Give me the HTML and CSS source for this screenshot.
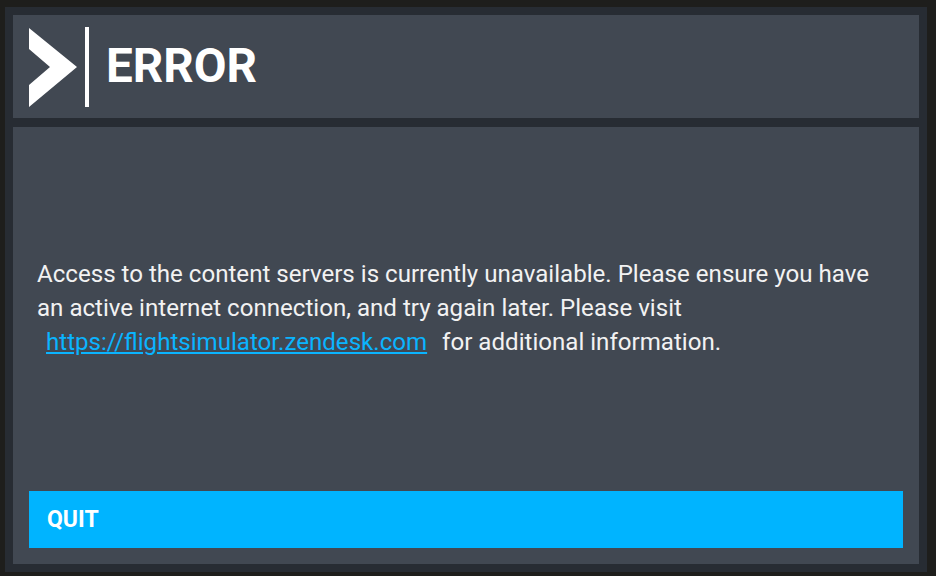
FILE: index.html
```html
<!DOCTYPE html>
<html lang="en">
<head>
<meta charset="utf-8">
<title>Error</title>
<link rel="stylesheet" href="styles.css">
</head>
<body>
<div class="frame">
  <header class="header">
    <svg class="logo" width="60" height="80" viewBox="0 0 60 80" aria-hidden="true">
      <polygon points="0,1 48,40 0,80 0,58 21,40 0,22" fill="#ffffff"/>
      <rect x="56" y="0" width="4" height="80" fill="#ffffff"/>
    </svg>
    <h1 class="title">ERROR</h1>
  </header>
  <main class="content">
    <div class="message">
      <p class="text">Access to the content servers is currently unavailable. Please ensure you have an active internet connection, and try again later. Please visit <a class="link" href="#">https://flightsimulator.zendesk.com</a> for additional information.</p>
    </div>
    <button class="quit">QUIT</button>
  </main>
</div>
</body>
</html>
```
FILE: styles.css
```css
html, body {
  margin: 0;
  padding: 0;
  height: 100%;
}
body {
  background: #1e1e1c;
  font-family: Roboto, "Liberation Sans", sans-serif;
  overflow: hidden;
}
.frame {
  box-sizing: border-box;
  margin: 7px 9px 0 5px;
  height: 565px;
  padding: 8px;
  background: #272c33;
  display: flex;
  flex-direction: column;
  gap: 9px;
}
.header {
  height: 103px;
  flex: none;
  background: #414852;
  display: flex;
  align-items: center;
  padding-left: 16px;
}
.logo {
  display: block;
  flex: none;
}
.title {
  margin: 0 0 0 17px;
  color: #ffffff;
  font-size: 47.6px;
  font-weight: 700;
  letter-spacing: 0;
  line-height: 1;
}
.content {
  flex: 1;
  background: #414852;
  display: flex;
  flex-direction: column;
  padding: 0 16px 16px;
}
.message {
  flex: 1;
  display: flex;
  align-items: center;
  padding: 0 8px 2px;
}
.text {
  margin: 0;
  width: 850px;
  color: #f2f2f2;
  font-size: 24.1px;
  line-height: 34px;
}
.link {
  color: #0ab4ff;
  text-decoration: underline;
  text-underline-offset: 2px;
  margin: 0 9px;
}
.quit {
  height: 57px;
  border: 0;
  margin: 0;
  background: #00b4ff;
  color: #ffffff;
  font-family: Roboto, "Liberation Sans", sans-serif;
  font-size: 23px;
  font-weight: 700;
  text-align: left;
  padding: 0 0 0 18px;
}
```
